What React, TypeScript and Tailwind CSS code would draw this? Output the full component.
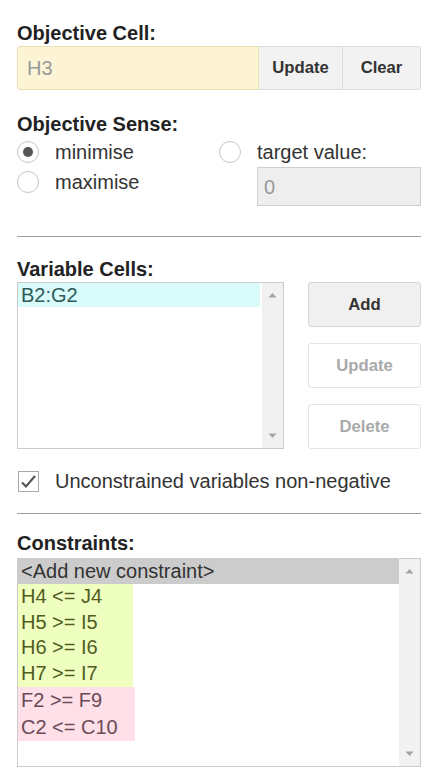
import React from "react";

type Row = { text: string; tone: "head" | "ok" | "bad" };

const constraints: Row[] = [
  { text: "<Add new constraint>", tone: "head" },
  { text: "H4 <= J4", tone: "ok" },
  { text: "H5 >= I5", tone: "ok" },
  { text: "H6 >= I6", tone: "ok" },
  { text: "H7 >= I7", tone: "ok" },
  { text: "F2 >= F9", tone: "bad" },
  { text: "C2 <= C10", tone: "bad" },
];

function Scrollbar() {
  return (
    <div className="flex w-[21px] shrink-0 flex-col justify-between bg-[#f1f1f1] py-[9px]">
      <svg width="21" height="6" viewBox="0 0 21 6" className="block">
        <polygon points="6.5,5.5 10.5,1 14.5,5.5" fill="#a3a3a3" />
      </svg>
      <svg width="21" height="6" viewBox="0 0 21 6" className="block">
        <polygon points="6.5,0.5 14.5,0.5 10.5,5" fill="#a3a3a3" />
      </svg>
    </div>
  );
}

function Radio({ checked, label }: { checked?: boolean; label: string }) {
  return (
    <div className="flex h-[30px] items-center">
      <span className="flex size-[22px] shrink-0 items-center justify-center rounded-full border border-[#c6c6c6] bg-white">
        {checked && <span className="size-[10px] rounded-full bg-[#555]" />}
      </span>
      <span className="ml-[16px] leading-[23px] text-[#333]">{label}</span>
    </div>
  );
}

function SideButton({ label, disabled }: { label: string; disabled?: boolean }) {
  return (
    <button
      className={
        disabled
          ? "h-[45px] w-full rounded-[3px] border border-[#e4e4e4] bg-white text-[16.7px] font-bold text-[#a9a9a9]"
          : "h-[45px] w-full rounded-[3px] border border-[#d6d6d6] bg-[#f0f0f0] text-[16.7px] font-bold text-[#333]"
      }
    >
      {label}
    </button>
  );
}

export default function App() {
  return (
    <div className="w-[435px] bg-white pt-[22px] pr-[14px] pl-[17px] font-['Liberation_Sans',Arial,sans-serif] text-[20px] text-[#333]">
      <div className="leading-[23px] font-bold text-[#222]">Objective Cell:</div>
      <div className="mt-px flex h-[44px]">
        <div className="flex flex-1 items-center rounded-l-[3px] border border-[#eadfb4] bg-[#fdf4d5] pl-[9px] text-[#999]">
          H3
        </div>
        <button className="w-[84px] border-y border-r border-[#dcdcdc] bg-[#f2f2f2] text-[16.7px] font-bold text-[#333]">
          Update
        </button>
        <button className="w-[78px] rounded-r-[3px] border-y border-r border-[#dcdcdc] bg-[#f2f2f2] text-[16.7px] font-bold text-[#333]">
          Clear
        </button>
      </div>

      <div className="mt-[23px] leading-[23px] font-bold text-[#222]">Objective Sense:</div>
      <div className="mt-px grid grid-cols-2">
        <div>
          <Radio checked label="minimise" />
          <Radio label="maximise" />
        </div>
        <div>
          <Radio label="target value:" />
          <div className="ml-[38px] flex h-[39px] items-center border border-[#cfcfcf] bg-[#eeeeee] pl-[6px] text-[#999]">
            0
          </div>
        </div>
      </div>

      <hr className="mt-[30px] border-t border-[#9f9f9f]" />

      <div className="mt-[21px] leading-[23px] font-bold text-[#222]">Variable Cells:</div>
      <div className="mt-px flex">
        <div className="flex h-[167px] w-[267px] border border-[#cccccc]">
          <div className="flex-1 pr-[2px]">
            <div className="h-[24px] bg-[#d9fcfb] pl-[3px] leading-[24px] text-[#2e5a5a]">B2:G2</div>
          </div>
          <Scrollbar />
        </div>
        <div className="ml-[24px] flex flex-1 flex-col gap-[16px]">
          <SideButton label="Add" />
          <SideButton label="Update" disabled />
          <SideButton label="Delete" disabled />
        </div>
      </div>

      <div className="mt-[21px] flex h-[23px] items-center">
        <span className="ml-px flex size-[21px] items-center justify-center border border-[#a9a9a9] bg-white">
          <svg width="17" height="15" viewBox="0 0 17 15">
            <path d="M2 8.5 L6 12.5 L15 2" fill="none" stroke="#555" strokeWidth="2.2" />
          </svg>
        </span>
        <span className="ml-[16px] leading-[23px] text-[#333]">Unconstrained variables non-negative</span>
      </div>

      <hr className="mt-[20px] border-t border-[#9f9f9f]" />

      <div className="mt-[18px] leading-[23px] font-bold text-[#222]">Constraints:</div>
      <div className="mt-[3px] flex h-[209px] border border-[#cccccc]">
        <div className="flex flex-1 flex-col">
          {constraints.map((c) =>
            c.tone === "head" ? (
              <div key={c.text} className="h-[25px] bg-[#cccccc] pl-[3px] leading-[25px] text-[#333]">
                {c.text}
              </div>
            ) : c.tone === "ok" ? (
              <div key={c.text} className="h-[25.7px] w-[115px] bg-[#efffbf] pl-[3px] leading-[25.7px] text-[#505c22]">
                {c.text}
              </div>
            ) : (
              <div key={c.text} className="h-[27px] w-[117px] bg-[#ffdfe8] pl-[3px] leading-[27px] text-[#6a4b57]">
                {c.text}
              </div>
            ),
          )}
        </div>
        <Scrollbar />
      </div>
    </div>
  );
}
